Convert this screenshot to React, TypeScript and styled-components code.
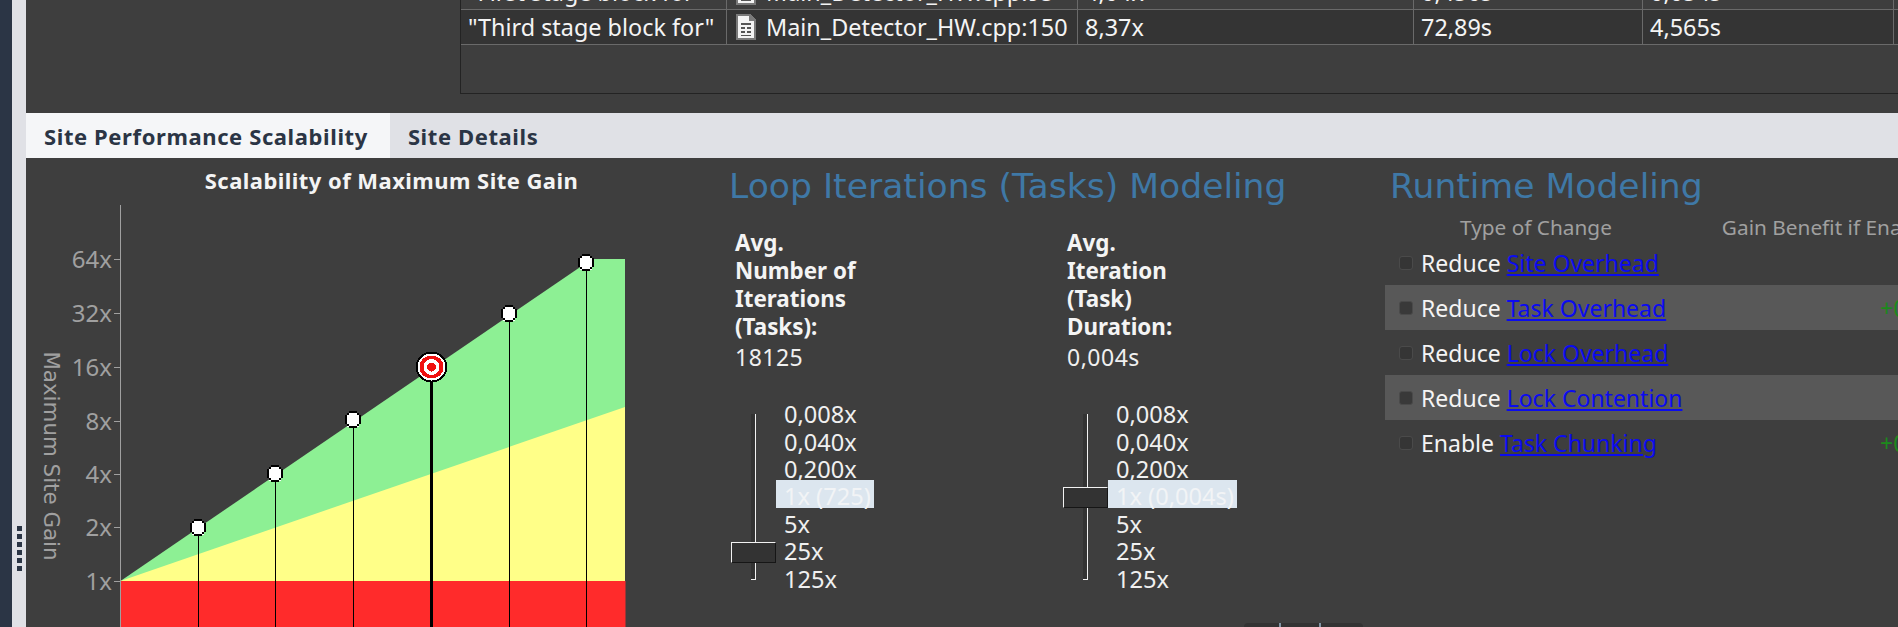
import React from 'react';
import styled, { createGlobalStyle } from 'styled-components';

const UI_FONT = `'Noto Sans', 'Open Sans', sans-serif`;
const HEAD_FONT = `'DejaVu Sans', sans-serif`;

const GlobalStyle = createGlobalStyle`
  html, body {
    margin: 0;
    padding: 0;
    width: 1898px;
    height: 627px;
    overflow: hidden;
    background: #3e3e3e;
    font-family: ${UI_FONT};
  }
`;

const Shell = styled.div`
  display: flex;
  width: 1898px;
  height: 627px;
  overflow: hidden;
  position: relative;
`;

const SideEdge = styled.div`
  width: 12px;
  flex: none;
  background: #2b3545;
`;

const Splitter = styled.div`
  width: 14px;
  flex: none;
  background: #e0e1e6;
  display: flex;
  flex-direction: column;
  align-items: center;
  gap: 3px;
  padding-top: 526px;
  box-sizing: border-box;
`;

const GripDot = styled.span`
  width: 5px;
  height: 5px;
  background: #2b3545;
`;

const Main = styled.div`
  flex: 1;
  min-width: 0;
  display: flex;
  flex-direction: column;
`;

const TopPane = styled.div`
  height: 113px;
  flex: none;
  padding-left: 434px;
  overflow: hidden;
`;

const TableBox = styled.div`
  height: 94px;
  border-left: 1px solid #232323;
  border-bottom: 1px solid #232323;
  box-sizing: border-box;
  display: flex;
  flex-direction: column;
  overflow: hidden;
`;

const Row = styled.div<{ $dark?: boolean; $clipped?: boolean }>`
  display: grid;
  grid-template-columns: 266px 351px 336px 229px 251px;
  height: 35px;
  flex: none;
  margin-top: ${(p) => (p.$clipped ? '-25px' : '0')};
  background: ${(p) => (p.$dark ? '#343434' : '#3e3e3e')};
  border-bottom: 1px solid #6a6a6a;
  box-sizing: border-box;
  color: #f4f4f4;
  font-size: 23.4px;
`;

const Cell = styled.div`
  display: flex;
  align-items: center;
  gap: 10px;
  padding-left: 7px;
  border-right: 1px solid #6a6a6a;
  box-sizing: border-box;
  white-space: nowrap;
  overflow: hidden;
`;

const FileGlyph = styled.svg`
  flex: none;
  margin-left: 2px;
`;

const Tabs = styled.div`
  height: 45px;
  flex: none;
  display: flex;
  background: #e0e1e6;
`;

const Tab = styled.div<{ $active?: boolean }>`
  display: flex;
  align-items: center;
  padding: 0 22px 0 18px;
  background: ${(p) => (p.$active ? '#f5f6f8' : 'transparent')};
  color: #2b3545;
  font-size: 22px;
  letter-spacing: 0.6px;
  font-weight: 700;
  white-space: nowrap;
`;

const Body = styled.div`
  flex: 1;
  min-height: 0;
  display: flex;
  overflow: hidden;
`;

const ChartColumn = styled.div`
  width: 703px;
  flex: none;
  display: flex;
  flex-direction: column;
`;

const ChartTitle = styled.div`
  height: 47px;
  flex: none;
  padding: 0 0 4px 28px;
  box-sizing: border-box;
  display: flex;
  align-items: center;
  justify-content: center;
  color: #f4f4f4;
  font-size: 22px;
  letter-spacing: 0.45px;
  font-weight: 700;
  white-space: nowrap;
`;

const LoopColumn = styled.div`
  width: 656px;
  flex: none;
`;

const Heading = styled.h2`
  margin: 0;
  height: 56px;
  display: flex;
  align-items: center;
  font-family: ${HEAD_FONT};
  font-size: 34.6px;
  font-weight: 400;
  color: #3f78a6;
  white-space: nowrap;
`;

const ModelColumns = styled.div`
  display: flex;
  padding-left: 6px;
  margin-top: 15px;
`;

const Model = styled.div`
  width: 332px;
  flex: none;
`;

const ModelLabel = styled.div`
  width: 140px;
  font-size: 22.4px;
  font-weight: 700;
  line-height: 28px;
  color: #f4f4f4;
`;

const ModelValue = styled.div`
  margin-top: 2px;
  font-size: 23px;
  letter-spacing: 0.5px;
  line-height: 28px;
  color: #f0f0f0;
`;

const SliderRow = styled.div`
  display: flex;
  margin-top: 27.2px;
`;

const Track = styled.div`
  width: 45px;
  height: 166px;
  flex: none;
  margin: 15.4px 0 0 -4px;
  position: relative;
  &::before {
    content: '';
    position: absolute;
    left: 20px;
    width: 5px;
    top: 0;
    bottom: 0;
    box-sizing: border-box;
    background: #333;
    border-right: 1px solid #f2f2f2;
    border-bottom: 1px solid #f2f2f2;
  }
`;

const Handle = styled.div<{ $top: number }>`
  position: absolute;
  left: 0;
  top: ${(p) => p.$top}px;
  width: 45px;
  height: 21px;
  box-sizing: border-box;
  background: #333;
  border: 1px solid #f2f2f2;
  border-right-color: #161616;
  border-bottom-color: #161616;
`;

const Ticks = styled.div`
  display: flex;
  flex-direction: column;
`;

const TickLabel = styled.div<{ $selected?: boolean }>`
  height: 27.4px;
  line-height: 32.5px;
  padding: 0 3px 0 8px;
  font-size: 23.6px;
  width: fit-content;
  white-space: nowrap;
  color: ${(p) => (p.$selected ? '#f2f4f6' : '#f0f0f0')};
  background: ${(p) => (p.$selected ? '#dce6ef' : 'transparent')};
`;

const RuntimeColumn = styled.div`
  flex: 1;
  min-width: 0;
`;

const RuntimeHeading = styled(Heading)`
  padding-left: 5px;
`;

const ChangeHeader = styled.div`
  display: flex;
  height: 26px;
  align-items: center;
  padding-left: 75px;
  gap: 110px;
  color: #a0a0a0;
  font-size: 20.8px;
  white-space: nowrap;
`;

const ChangeRow = styled.div<{ $striped?: boolean }>`
  height: 45px;
  display: flex;
  align-items: center;
  position: relative;
  padding-left: 14px;
  background: ${(p) => (p.$striped ? '#585858' : 'transparent')};
  color: #f4f4f4;
  font-size: 23px;
  white-space: nowrap;
`;

const CheckBox = styled.span<{ $striped?: boolean }>`
  width: 14px;
  height: 14px;
  flex: none;
  margin-right: 8px;
  border-radius: 3px;
  box-sizing: border-box;
  background: ${(p) => (p.$striped ? '#393939' : '#353535')};
  border: 1px solid #4a4a4a;
`;

const ChangeLink = styled.a`
  color: #0b0bf0;
  text-decoration: underline;
  margin-left: 6px;
`;

const Benefit = styled.span`
  position: absolute;
  left: 495px;
  color: #1c8a1c;
`;

const BottomBar = styled.div`
  position: absolute;
  left: 1244px;
  top: 623px;
  width: 119px;
  height: 8px;
  background: #333;
  border-radius: 4px;
`;

const BarMark = styled.span<{ $x: number }>`
  position: absolute;
  left: ${(p) => p.$x}px;
  top: 0;
  width: 2px;
  height: 4px;
  background: #8296a6;
`;

const TICKS = [
  ['64x', 259],
  ['32x', 313],
  ['16x', 367],
  ['8x', 421],
  ['4x', 474],
  ['2x', 527],
  ['1x', 581],
] as const;

const POINTS = [
  [198.5, 528],
  [275.5, 474],
  [353.5, 420],
  [509.5, 314],
  [586.5, 263],
];

// the marker icon is a small bitmap scaled up, so each cell is a 2px block
const DOT = ['..####..', '.#....#.', '#......#', '#......#', '#......#', '#......#', '.#....#.', '..####..'];

const Dot = ({ x, y }: { x: number; y: number }) => (
  <g shapeRendering="crispEdges" transform={`translate(${Math.floor(x) - 8} ${y - 9})`}>
    <rect x="2" y="2" width="12" height="14" fill="#fff" />
    {DOT.map((row, r) =>
      row.split('').map((c, i) =>
        c === '#' ? <rect key={`${r}-${i}`} x={i * 2} y={r * 2.125} width="2" height="2.2" fill="#000" /> : null,
      ),
    )}
  </g>
);

const ScalabilityChart = () => (
  <svg width="703" height="422" viewBox="26 205 703 422" style={{ display: 'block' }}>
    <polygon points="120.5,581 592,259 625,259 625,627 120.5,627" fill="#8df094" />
    <polygon points="120.5,581 625,407 625,627 120.5,627" fill="#ffff88" />
    <rect x="120.5" y="581" width="505" height="46" fill="#ff2b2b" />
    <line x1="120.5" y1="205" x2="120.5" y2="627" stroke="#a0a0a0" />
    {TICKS.map(([label, y]) => (
      <g key={label}>
        <line x1="114" x2="120" y1={y + 0.5} y2={y + 0.5} stroke="#a0a0a0" />
        <text x="112" y={y + 9} textAnchor="end" fontFamily="'Noto Sans', sans-serif" fontSize="24" fill="#a0a0a0">
          {label}
        </text>
      </g>
    ))}
    <text
      transform="translate(44 456) rotate(90)"
      textAnchor="middle"
      fontFamily="'DejaVu Sans', sans-serif"
      fontSize="21.4"
      fill="#a0a0a0"
    >
      Maximum Site Gain
    </text>
    {POINTS.map(([x, y]) => (
      <g key={x}>
        <line x1={x} x2={x} y1={y} y2="627" stroke="#000" shapeRendering="crispEdges" />
        <Dot x={x} y={y} />
      </g>
    ))}
    <g shapeRendering="crispEdges">
      <rect x="430" y="380" width="3" height="247" fill="#000" />
      <ellipse cx="431.5" cy="367" rx="16" ry="15.5" fill="#000" />
      <ellipse cx="431.5" cy="367" rx="14" ry="13.5" fill="#fff" />
      <ellipse cx="431.5" cy="367" rx="12" ry="11.5" fill="#f01010" />
      <ellipse cx="431.5" cy="367" rx="8" ry="8" fill="#fff" />
      <ellipse cx="431.5" cy="367" rx="4.5" ry="4.5" fill="#f01010" />
    </g>
  </svg>
);

const FileIcon = () => (
  <FileGlyph width="20" height="26" viewBox="0 0 20 26" shapeRendering="crispEdges">
    <path d="M0 0h14l6 6v20H0z" fill="#7a7a7a" />
    <path d="M2 2h11v5h5v17H2z" fill="#f4f4f4" />
    <path d="M5 9h10v2H5zM5 13h4v2H5zM11 13h4v2h-4zM5 17h4v2H5zM11 17h4v2h-4zM5 21h10v1H5z" fill="#555" />
  </FileGlyph>
);

const SCALES = ['0,008x', '0,040x', '0,200x'];
const SCALES_AFTER = ['5x', '25x', '125x'];

const ModelBlock = ({
  label,
  value,
  selected,
  handleTop,
}: {
  label: string[];
  value: string;
  selected: string;
  handleTop: number;
}) => (
  <Model>
    <ModelLabel>
      {label.map((l) => (
        <div key={l}>{l}</div>
      ))}
    </ModelLabel>
    <ModelValue>{value}</ModelValue>
    <SliderRow>
      <Track>
        <Handle $top={handleTop} />
      </Track>
      <Ticks>
        {SCALES.map((s) => (
          <TickLabel key={s}>{s}</TickLabel>
        ))}
        <TickLabel $selected>{selected}</TickLabel>
        {SCALES_AFTER.map((s) => (
          <TickLabel key={s}>{s}</TickLabel>
        ))}
      </Ticks>
    </SliderRow>
  </Model>
);

const CHANGES = [
  { verb: 'Reduce', link: 'Site Overhead' },
  { verb: 'Reduce', link: 'Task Overhead', benefit: '+0' },
  { verb: 'Reduce', link: 'Lock Overhead' },
  { verb: 'Reduce', link: 'Lock Contention' },
  { verb: 'Enable', link: 'Task Chunking', benefit: '+0' },
];

const App = () => (
  <Shell>
    <GlobalStyle />
    <SideEdge />
    <Splitter>
      {[0, 1, 2, 3, 4, 5].map((i) => (
        <GripDot key={i} />
      ))}
    </Splitter>
    <Main>
      <TopPane>
        <TableBox>
          <Row $clipped>
            <Cell>"First stage block for"</Cell>
            <Cell>
              <FileIcon />
              Main_Detector_HW.cpp:95
            </Cell>
            <Cell>4,04x</Cell>
            <Cell>0,450s</Cell>
            <Cell>0,054s</Cell>
          </Row>
          <Row $dark>
            <Cell>"Third stage block for"</Cell>
            <Cell>
              <FileIcon />
              Main_Detector_HW.cpp:150
            </Cell>
            <Cell>8,37x</Cell>
            <Cell>72,89s</Cell>
            <Cell>4,565s</Cell>
          </Row>
        </TableBox>
      </TopPane>
      <Tabs>
        <Tab $active>Site Performance Scalability</Tab>
        <Tab>Site Details</Tab>
      </Tabs>
      <Body>
        <ChartColumn>
          <ChartTitle>Scalability of Maximum Site Gain</ChartTitle>
          <ScalabilityChart />
        </ChartColumn>
        <LoopColumn>
          <Heading>Loop Iterations (Tasks) Modeling</Heading>
          <ModelColumns>
            <ModelBlock
              label={['Avg.', 'Number of', 'Iterations', '(Tasks):']}
              value="18125"
              selected="1x (725)"
              handleTop={128}
            />
            <ModelBlock
              label={['Avg.', 'Iteration', '(Task)', 'Duration:']}
              value="0,004s"
              selected="1x (0,004s)"
              handleTop={73}
            />
          </ModelColumns>
        </LoopColumn>
        <RuntimeColumn>
          <RuntimeHeading>Runtime Modeling</RuntimeHeading>
          <ChangeHeader>
            <span>Type of Change</span>
            <span>Gain Benefit if Enabled</span>
          </ChangeHeader>
          {CHANGES.map((c, i) => (
            <ChangeRow key={c.link} $striped={i % 2 === 1}>
              <CheckBox $striped={i % 2 === 1} />
              {c.verb}
              <ChangeLink href="#">{c.link}</ChangeLink>
              {c.benefit && <Benefit>{c.benefit}</Benefit>}
            </ChangeRow>
          ))}
        </RuntimeColumn>
      </Body>
    </Main>
    <BottomBar>
      <BarMark $x={35} />
      <BarMark $x={75} />
    </BottomBar>
  </Shell>
);

export default App;
